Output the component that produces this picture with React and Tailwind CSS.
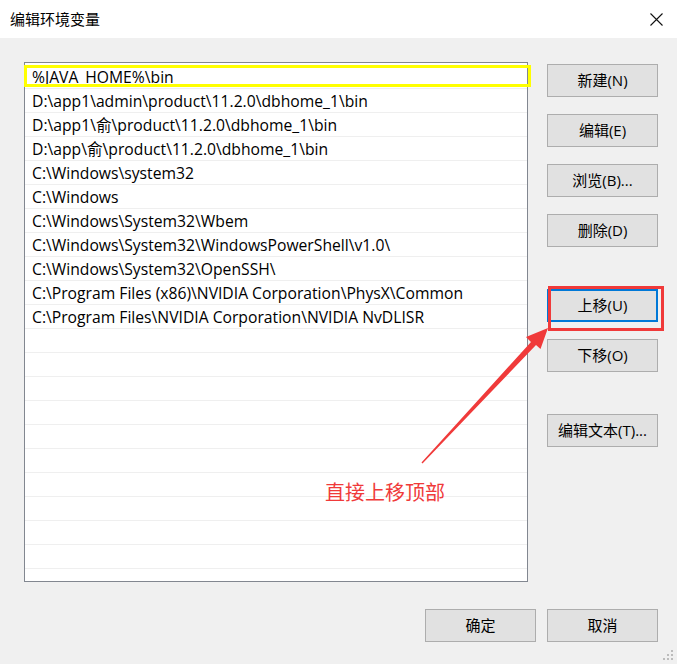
import React from "react";

const rows = [
  "%JAVA_HOME%\\bin",
  "D:\\app1\\admin\\product\\11.2.0\\dbhome_1\\bin",
  "D:\\app1\\俞\\product\\11.2.0\\dbhome_1\\bin",
  "D:\\app\\俞\\product\\11.2.0\\dbhome_1\\bin",
  "C:\\Windows\\system32",
  "C:\\Windows",
  "C:\\Windows\\System32\\Wbem",
  "C:\\Windows\\System32\\WindowsPowerShell\\v1.0\\",
  "C:\\Windows\\System32\\OpenSSH\\",
  "C:\\Program Files (x86)\\NVIDIA Corporation\\PhysX\\Common",
  "C:\\Program Files\\NVIDIA Corporation\\NVIDIA NvDLISR",
];

const FONT = { fontFamily: '"Open Sans", "Noto Sans CJK SC", sans-serif' };

function Btn({ children, className = "" }) {
  return (
    <button
      className={
        "w-[111px] h-[33px] shrink-0 bg-[#e1e1e1] border border-[#adadad] text-[15px] text-black flex items-center justify-center " +
        className
      }
    >
      {children}
    </button>
  );
}

export default function App() {
  const all = [...rows, ...Array(11).fill("")];
  return (
    <div
      className="relative w-[677px] h-[664px] bg-[#f0f0f0] overflow-hidden flex flex-col"
      style={FONT}
    >
      {/* title bar */}
      <div className="h-[38px] shrink-0 bg-white flex items-center justify-between pl-[10px] pr-[14px]">
        <span className="text-[15px] text-black">编辑环境变量</span>
        <svg width="13" height="13" viewBox="0 0 13 13" className="mt-[1px]">
          <path d="M0.5 0.5 L12.5 12.5 M12.5 0.5 L0.5 12.5" stroke="#111" strokeWidth="1.1" />
        </svg>
      </div>

      {/* body */}
      <div className="flex pl-[24px] pt-[24px]">
        <div className="w-[504px] h-[520px] bg-white border border-[#828790] pt-[2px] overflow-hidden">
          {all.map((r, i) => (
            <div
              key={i}
              className="h-[24px] border-b border-[#efefef] pl-[7px] pt-[1px] text-[15.7px] leading-[23px] text-black whitespace-nowrap"
            >
              {r}
            </div>
          ))}
        </div>
        <div className="ml-[19px] pt-[2px] flex flex-col">
          <Btn>新建(N)</Btn>
          <Btn className="mt-[17px]">编辑(E)</Btn>
          <Btn className="mt-[17px]">浏览(B)...</Btn>
          <Btn className="mt-[17px]">删除(D)</Btn>
          <Btn className="mt-[42px] !border-2 !border-[#0078d7]">上移(U)</Btn>
          <Btn className="mt-[17px]">下移(O)</Btn>
          <Btn className="mt-[42px]">编辑文本(T)...</Btn>
        </div>
      </div>

      {/* bottom buttons */}
      <div className="flex justify-end gap-[11px] pr-[19px] mt-[27px]">
        <Btn>确定</Btn>
        <Btn>取消</Btn>
      </div>

      {/* resize grip */}
      <svg className="absolute right-[4px] bottom-[4px]" width="10" height="10" viewBox="0 0 10 10">
        {[[8, 0], [8, 4], [4, 4], [8, 8], [4, 8], [0, 8]].map(([x, y], i) => (
          <rect key={i} x={x} y={y} width="2" height="2" fill="#bcbcbc" />
        ))}
      </svg>

      {/* yellow highlight */}
      <div className="absolute left-[24px] top-[65px] w-[507px] h-[22px] border-[3px] border-[#ffff00]" />

      {/* red box */}
      <div className="absolute left-[548px] top-[286px] w-[116px] h-[45px] border-[3px] border-[#f03a3a]" />

      {/* arrow */}
      <svg className="absolute left-0 top-0 pointer-events-none" width="677" height="664">
        <polygon
          points="421.5,462.5 531,342 526,337 548,328 540.5,349 536,345 422.5,463.5"
          fill="#f03a3a"
        />
      </svg>

      {/* annotation */}
      <div className="absolute left-[325px] top-[480px] text-[20px] leading-[26px] text-[#f03a3a]">
        直接上移顶部
      </div>
    </div>
  );
}
